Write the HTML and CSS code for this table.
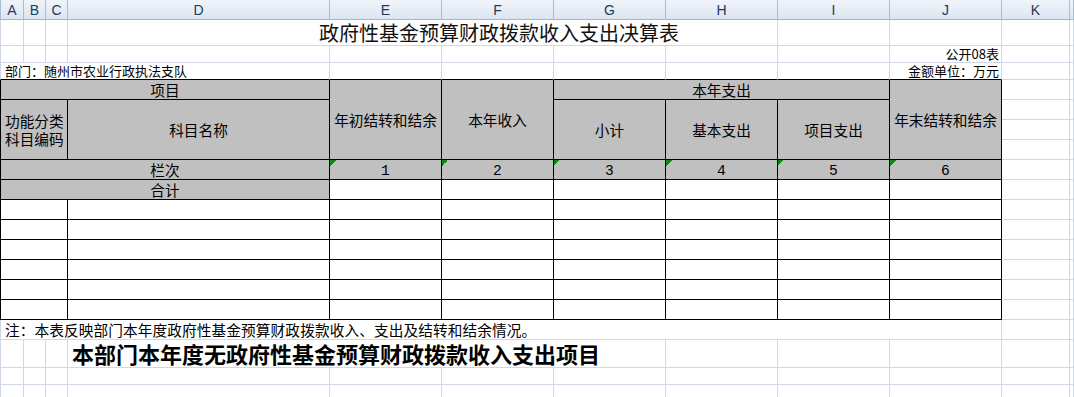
FILE: index.html
```html
<!DOCTYPE html>
<html lang="zh-CN">
<head>
<meta charset="utf-8">
<title>政府性基金预算财政拨款收入支出决算表</title>
<link rel="stylesheet" href="styles.css">
</head>
<body>
<div class="sheet">
  <!-- column header -->
  <div class="c hd first">A</div><div class="c hd">B</div><div class="c hd">C</div><div class="c hd">D</div>
  <div class="c hd">E</div><div class="c hd">F</div><div class="c hd">G</div><div class="c hd">H</div>
  <div class="c hd">I</div><div class="c hd">J</div><div class="c hd">K</div><div class="c hd"></div>

  <!-- row 1: title -->
  <div class="c first"></div><div class="c"></div><div class="c"></div>
  <div class="c title span5">政府性基金预算财政拨款收入支出决算表</div>
  <div class="c"></div><div class="c"></div><div class="c"></div><div class="c"></div>

  <!-- row 2 -->
  <div class="c first"></div><div class="c"></div><div class="c"></div><div class="c"></div>
  <div class="c"></div><div class="c"></div><div class="c"></div><div class="c"></div>
  <div class="c"></div><div class="c small right">公开08表</div><div class="c"></div><div class="c"></div>

  <!-- row 3 -->
  <div class="c first small left span4 kb">部门：随州市农业行政执法支队</div>
  <div class="c kb"></div><div class="c kb"></div><div class="c kb"></div><div class="c kb"></div><div class="c kb"></div>
  <div class="c small right kb">金额单位：万元</div><div class="c"></div><div class="c"></div>

  <!-- row 4 -->
  <div class="c first k g ctr span4">项目</div>
  <div class="c k g ctr rs4">年初结转和结余</div>
  <div class="c k g ctr rs4">本年收入</div>
  <div class="c k g ctr span3">本年支出</div>
  <div class="c k g ctr rs4">年末结转和结余</div>
  <div class="c"></div><div class="c"></div>

  <!-- rows 5-7 -->
  <div class="c first k g vleft span3 rs3">功能分类<br>科目编码</div>
  <div class="c k g ctr rs3">科目名称</div>
  <div class="c k g ctr rs3">小计</div>
  <div class="c k g ctr rs3">基本支出</div>
  <div class="c k g ctr rs3">项目支出</div>
  <div class="c"></div><div class="c"></div>
  <div class="c"></div><div class="c"></div>
  <div class="c"></div><div class="c"></div>

  <!-- 栏次 -->
  <div class="c first k g ctr span4">栏次</div>
  <div class="c k g ctr num tri">1</div>
  <div class="c k g ctr num tri">2</div>
  <div class="c k g ctr num tri">3</div>
  <div class="c k g ctr num tri">4</div>
  <div class="c k g ctr num tri">5</div>
  <div class="c k g ctr num tri">6</div>
  <div class="c"></div><div class="c"></div>

  <!-- 合计 -->
  <div class="c first k g ctr span4">合计</div>
  <div class="c k"></div><div class="c k"></div><div class="c k"></div><div class="c k"></div><div class="c k"></div><div class="c k"></div>
  <div class="c"></div><div class="c"></div>

  <!-- data rows -->
  <div class="c first k span3"></div><div class="c k"></div><div class="c k"></div><div class="c k"></div><div class="c k"></div><div class="c k"></div><div class="c k"></div><div class="c k"></div><div class="c"></div><div class="c"></div>
  <div class="c first k span3"></div><div class="c k"></div><div class="c k"></div><div class="c k"></div><div class="c k"></div><div class="c k"></div><div class="c k"></div><div class="c k"></div><div class="c"></div><div class="c"></div>
  <div class="c first k span3"></div><div class="c k"></div><div class="c k"></div><div class="c k"></div><div class="c k"></div><div class="c k"></div><div class="c k"></div><div class="c k"></div><div class="c"></div><div class="c"></div>
  <div class="c first k span3"></div><div class="c k"></div><div class="c k"></div><div class="c k"></div><div class="c k"></div><div class="c k"></div><div class="c k"></div><div class="c k"></div><div class="c"></div><div class="c"></div>
  <div class="c first k span3"></div><div class="c k"></div><div class="c k"></div><div class="c k"></div><div class="c k"></div><div class="c k"></div><div class="c k"></div><div class="c k"></div><div class="c"></div><div class="c"></div>
  <div class="c first k span3"></div><div class="c k"></div><div class="c k"></div><div class="c k"></div><div class="c k"></div><div class="c k"></div><div class="c k"></div><div class="c k"></div><div class="c"></div><div class="c"></div>

  <!-- note -->
  <div class="c first note span10">注：本表反映部门本年度政府性基金预算财政拨款收入、支出及结转和结余情况。</div>
  <div class="c"></div><div class="c"></div>

  <!-- big statement -->
  <div class="c first"></div><div class="c"></div><div class="c"></div>
  <div class="c big span4">本部门本年度无政府性基金预算财政拨款收入支出项目</div>
  <div class="c"></div><div class="c"></div><div class="c"></div><div class="c"></div><div class="c"></div>

  <!-- empty rows -->
  <div class="c first"></div><div class="c"></div><div class="c"></div><div class="c"></div><div class="c"></div><div class="c"></div><div class="c"></div><div class="c"></div><div class="c"></div><div class="c"></div><div class="c"></div><div class="c"></div>
  <div class="c first"></div><div class="c"></div><div class="c"></div><div class="c"></div><div class="c"></div><div class="c"></div><div class="c"></div><div class="c"></div><div class="c"></div><div class="c"></div><div class="c"></div><div class="c"></div>
</div>
</body>
</html>
```
FILE: styles.css
```css
html, body {
  margin: 0;
  padding: 0;
  background: #ffffff;
  overflow: hidden;
}

body {
  width: 1074px;
  height: 397px;
  font-family: "Noto Sans CJK SC", "Noto Sans", sans-serif;
  color: #000;
}

.sheet {
  display: grid;
  grid-template-columns: 24px 22px 22px 262px 112px 112px 112px 112px 112px 112px 68px 1fr;
  grid-template-rows: 20px 26px 17px 17px 20px 20px 20px 20px 20px 20px 20px 20px 20px 20px 20px 20px 20px 28px 17px 17px;
}

.c {
  box-sizing: border-box;
  border-right: 1px solid #d0d7e5;
  border-bottom: 1px solid #d0d7e5;
  min-width: 0;
  white-space: nowrap;
  font-size: 14.67px;
  line-height: 18px;
}

.first {
  border-left: 1px solid #d0d7e5;
}

/* column header */
.hd {
  background: linear-gradient(#f1f5fb, #dce5f1);
  border-right-color: #a9bdd4;
  border-bottom-color: #9eb6ce;
  font-family: "Liberation Sans", Arial, sans-serif;
  font-size: 14px;
  color: #213a5c;
  display: flex;
  align-items: center;
  justify-content: center;
  line-height: 16px;
  padding-top: 1px;
}
.hd.first {
  border-left-color: #a9bdd4;
}

/* spans */
.span3 { grid-column: span 3; }
.span4 { grid-column: span 4; }
.span5 { grid-column: span 5; }
.span10 { grid-column: span 10; }
.rs3 { grid-row: span 3; }
.rs4 { grid-row: span 4; }

/* title */
.title {
  font-size: 20px;
  line-height: 22px;
  display: flex;
  align-items: flex-end;
  justify-content: center;
  padding-left: 153px;
  padding-bottom: 1px;
  color: #111;
}

.small {
  font-size: 13px;
  line-height: 15px;
  display: flex;
  align-items: flex-end;
  padding-bottom: 1px;
}
.small.right {
  justify-content: flex-end;
  padding-right: 2px;
}
.small.left {
  padding-left: 4px;
}

/* black table borders */
.k {
  border-right-color: #000;
  border-bottom-color: #000;
}
.k.first {
  border-left-color: #000;
}
.kb {
  border-bottom-color: #000;
}

.g {
  background-color: #c0c0c0;
}

.ctr {
  display: flex;
  align-items: center;
  justify-content: center;
  text-align: center;
}

.vleft {
  display: flex;
  align-items: center;
  padding-left: 4px;
  line-height: 18px;
}

.num {
  font-family: "Liberation Mono", "DejaVu Sans Mono", monospace;
  font-size: 14.67px;
  padding-top: 2px;
}

.tri {
  background-image: linear-gradient(135deg, #0b8a12 0 50%, transparent 50%);
  background-size: 6px 6px;
  background-repeat: no-repeat;
  background-position: 0 0;
}

.note {
  font-size: 14.67px;
  line-height: 18px;
  letter-spacing: 0.1px;
  display: flex;
  align-items: center;
  padding-left: 4px;
}

.big {
  font-size: 22px;
  font-weight: bold;
  line-height: 24px;
  display: flex;
  align-items: flex-end;
  padding-left: 4px;
  padding-bottom: 2px;
}
```
